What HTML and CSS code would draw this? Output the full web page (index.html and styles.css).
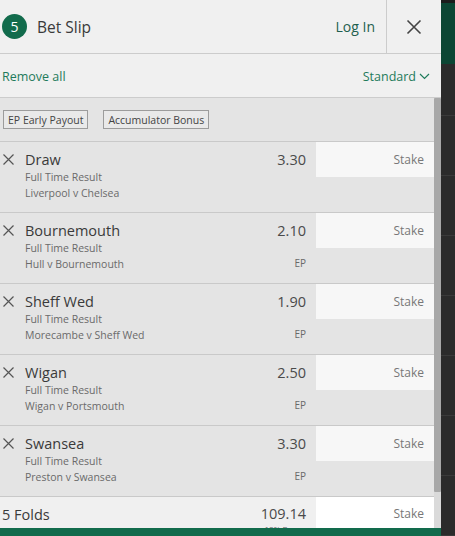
FILE: index.html
```html
<!DOCTYPE html>
<html>
<head>
<meta charset="utf-8">
<link rel="stylesheet" href="styles.css">
</head>
<body>
<div class="page">
  <div class="panel">
    <header class="head">
      <div class="brand">
        <span class="count">5</span>
        <span class="title">Bet Slip</span>
      </div>
      <a class="login">Log In</a>
      <button class="close" aria-label="Close">
        <svg width="16" height="16" viewBox="0 0 16 16"><path d="M1.5 1.5 L14.5 14.5 M14.5 1.5 L1.5 14.5" stroke="#444" stroke-width="1.6" fill="none"/></svg>
      </button>
    </header>
    <div class="toolbar">
      <a class="remove">Remove all</a>
      <a class="mode">Standard
        <svg width="11" height="7" viewBox="0 0 11 7"><path d="M1 1 L5.5 5.5 L10 1" stroke="#1e7b5b" stroke-width="1.2" fill="none"/></svg>
      </a>
    </div>
    <div class="scroller">
      <div class="list">
        <div class="tags">
          <span class="tag">EP Early Payout</span>
          <span class="tag">Accumulator Bonus</span>
        </div>
        <div class="bet">
          <svg class="x" width="11" height="11" viewBox="0 0 11 11"><path d="M0.5 0.5 L10.5 10.5 M10.5 0.5 L0.5 10.5" stroke="#555" stroke-width="1.2" fill="none"/></svg>
          <div class="info">
            <div class="sel">Draw</div>
            <div class="sub">Full Time Result</div>
            <div class="sub">Liverpool v Chelsea</div>
          </div>
          <div class="odds"><div class="price">3.30</div></div>
          <div class="stake">Stake</div>
        </div>
        <div class="bet">
          <svg class="x" width="11" height="11" viewBox="0 0 11 11"><path d="M0.5 0.5 L10.5 10.5 M10.5 0.5 L0.5 10.5" stroke="#555" stroke-width="1.2" fill="none"/></svg>
          <div class="info">
            <div class="sel">Bournemouth</div>
            <div class="sub">Full Time Result</div>
            <div class="sub">Hull v Bournemouth</div>
          </div>
          <div class="odds"><div class="price">2.10</div><div class="ep">EP</div></div>
          <div class="stake">Stake</div>
        </div>
        <div class="bet">
          <svg class="x" width="11" height="11" viewBox="0 0 11 11"><path d="M0.5 0.5 L10.5 10.5 M10.5 0.5 L0.5 10.5" stroke="#555" stroke-width="1.2" fill="none"/></svg>
          <div class="info">
            <div class="sel">Sheff Wed</div>
            <div class="sub">Full Time Result</div>
            <div class="sub">Morecambe v Sheff Wed</div>
          </div>
          <div class="odds"><div class="price">1.90</div><div class="ep">EP</div></div>
          <div class="stake">Stake</div>
        </div>
        <div class="bet">
          <svg class="x" width="11" height="11" viewBox="0 0 11 11"><path d="M0.5 0.5 L10.5 10.5 M10.5 0.5 L0.5 10.5" stroke="#555" stroke-width="1.2" fill="none"/></svg>
          <div class="info">
            <div class="sel">Wigan</div>
            <div class="sub">Full Time Result</div>
            <div class="sub">Wigan v Portsmouth</div>
          </div>
          <div class="odds"><div class="price">2.50</div><div class="ep">EP</div></div>
          <div class="stake">Stake</div>
        </div>
        <div class="bet">
          <svg class="x" width="11" height="11" viewBox="0 0 11 11"><path d="M0.5 0.5 L10.5 10.5 M10.5 0.5 L0.5 10.5" stroke="#555" stroke-width="1.2" fill="none"/></svg>
          <div class="info">
            <div class="sel">Swansea</div>
            <div class="sub">Full Time Result</div>
            <div class="sub">Preston v Swansea</div>
          </div>
          <div class="odds"><div class="price">3.30</div><div class="ep">EP</div></div>
          <div class="stake">Stake</div>
        </div>
        <div class="folds">
          <div class="folds-name">5 Folds</div>
          <div class="folds-odds"><div class="price">109.14</div><div class="bonus">10% Bonus</div></div>
          <div class="stake white">Stake</div>
        </div>
      </div>
      <div class="scrollbar"><div class="thumb"></div></div>
    </div>
    <div class="footer"></div>
  </div>
  <div class="side">
    <div class="side-top"></div>
    <div class="side-rest"></div>
  </div>
</div>
</body>
</html>
```
FILE: styles.css
```css
* { box-sizing: border-box; }
html, body { margin: 0; padding: 0; }
body {
  background: #2b2b2b;
  font-family: "Open Sans", "Noto Sans", sans-serif;
  color: #333;
}
.page {
  display: flex;
  width: 455px;
  height: 536px;
  overflow: hidden;
}
.panel {
  width: 441px;
  height: 536px;
  display: flex;
  flex-direction: column;
  background: #f0f0f0;
}
.head {
  height: 54px;
  flex: none;
  display: flex;
  align-items: stretch;
  border-bottom: 1px solid #cccccc;
}
.brand {
  flex: 1;
  display: flex;
  align-items: center;
  padding-left: 2px;
}
.count {
  width: 25px;
  height: 25px;
  border-radius: 50%;
  background: #126b4c;
  color: #fff;
  font-size: 14px;
  display: flex;
  align-items: center;
  justify-content: center;
}
.title {
  margin-left: 10px;
  font-size: 15.5px;
  color: #3a3a3a;
}
.login {
  display: flex;
  align-items: center;
  font-size: 14px;
  color: #1f5f4e;
  padding-right: 11px;
}
.close {
  width: 55px;
  border: 0;
  border-left: 1px solid #cccccc;
  background: transparent;
  display: flex;
  align-items: center;
  justify-content: center;
  padding: 0;
}
.toolbar {
  height: 44px;
  flex: none;
  display: flex;
  align-items: center;
  justify-content: space-between;
  padding: 1px 11px 0 2px;
  border-bottom: 1px solid #cccccc;
  font-size: 12.5px;
  color: #1e7b5b;
}
.mode { display: flex; align-items: center; gap: 3px; }
.scroller {
  flex: 1;
  display: flex;
  min-height: 0;
}
.list {
  flex: 1;
  background: #e4e4e4;
  overflow: hidden;
}
.scrollbar {
  width: 7px;
  background: #dadada;
  display: flex;
  flex-direction: column;
}
.thumb {
  height: 394px;
  background: #a8a8a8;
  border-radius: 1px;
}
.tags {
  height: 44px;
  display: flex;
  align-items: center;
  gap: 15px;
  padding-left: 3px;
  border-bottom: 1px solid #c9c9c9;
}
.tag {
  height: 19px;
  border: 1px solid #9c9c9c;
  background: #e9e9e9;
  font-size: 10.5px;
  color: #444;
  padding: 0 4px;
  display: flex;
  align-items: center;
}
.bet {
  height: 71px;
  display: flex;
  border-bottom: 1px solid #c9c9c9;
}
.x {
  flex: none;
  margin: 12px 11px 0 3px;
}
.info {
  flex: 1;
  padding-top: 9px;
}
.sel {
  font-size: 14.5px;
  line-height: 18px;
  color: #3a3a3a;
}
.sub {
  font-size: 10.5px;
  line-height: 16px;
  color: #6a6a6a;
}
.odds {
  width: 80px;
  padding: 9px 10px 0 0;
  text-align: right;
}
.price {
  font-size: 14.5px;
  line-height: 18px;
  color: #4a4a4a;
}
.ep {
  margin-top: 15px;
  font-size: 10px;
  line-height: 16px;
  color: #6a6a6a;
}
.stake {
  width: 118px;
  height: 35px;
  background: #f7f7f7;
  font-size: 12px;
  color: #777;
  text-align: right;
  padding-right: 10px;
  line-height: 35px;
}
.stake.white { background: #ffffff; height: 31px; line-height: 33px; }
.folds {
  height: 31px;
  display: flex;
  background: #f0f0f0;
  overflow: hidden;
}
.folds-name {
  flex: 1;
  padding: 2px 0 0 2px;
  font-size: 14.5px;
  line-height: 31px;
  color: #3a3a3a;
}
.folds-odds {
  text-align: right;
  padding: 8px 10px 0 0;
}
.bonus {
  margin-top: 1px;
  font-size: 8px;
  line-height: 10px;
  color: #666;
}
.footer {
  height: 8px;
  flex: none;
  background: #126b4c;
}
.side {
  width: 14px;
  display: flex;
  flex-direction: column;
}
.side-top {
  height: 64px;
  background: #0c4634;
  border-top: 3px solid #1c1c1c;
}
.side-rest {
  flex: 1;
  background: repeating-linear-gradient(to bottom, #2b2b2b 0, #2b2b2b 51px, #3a3a3a 51px, #3a3a3a 52px, #2b2b2b 52px, #2b2b2b 60px);
}
```
